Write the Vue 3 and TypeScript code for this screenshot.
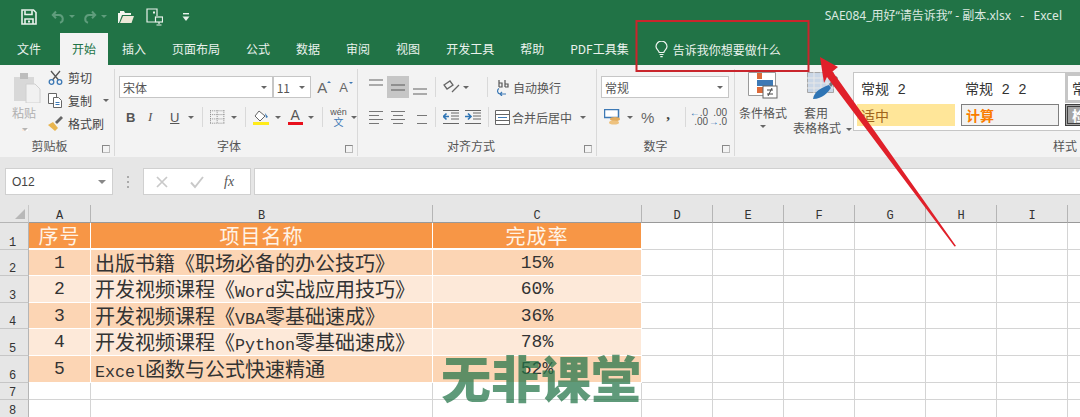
<template>
  <div class="excel">
    <header class="titlebar">
      <div class="qat">
        <svg class="qi save" width="16" height="16" viewBox="0 0 16 16" fill="none" stroke="#e9f2ec" stroke-width="1.6">
          <path d="M1 1h11.5L15 3.5V15H1z" />
          <path d="M4 1.5v4h7v-4M4 15v-5h8v5" />
          <rect x="7" y="11.5" width="2" height="2" fill="#e9f2ec" stroke="none" />
        </svg>
        <svg class="qi undo" width="14" height="14" viewBox="0 0 14 14" fill="none" stroke="#5f9d7c" stroke-width="2">
          <path d="M5 1.5 1.8 5 5 8.2M2 5h6a4 4 0 0 1 1 7.8" />
        </svg>
        <span class="qcaret dim"></span>
        <svg class="qi redo" width="14" height="14" viewBox="0 0 14 14" fill="none" stroke="#5f9d7c" stroke-width="2">
          <path d="M9 1.5 12.2 5 9 8.2M12 5H6a4 4 0 0 0-1 7.8" />
        </svg>
        <span class="qcaret dim"></span>
        <svg class="qi open" width="16" height="14" viewBox="0 0 16 14">
          <path d="M0 13V3h2V1h4l1 2h6v2H4L1 13z" fill="#f3f6ef" />
          <path d="M2 13 5 6h11l-2.5 7z" fill="#ece9d8" />
        </svg>
        <svg class="qi preview" width="17" height="18" viewBox="0 0 17 18" fill="none" stroke="#e9f2ec" stroke-width="1.2">
          <path d="M9 14H1V1h10v7" />
          <rect x="7" y="3.5" width="2" height="2" fill="#e9f2ec" stroke="none" />
          <rect x="9.5" y="9" width="7" height="5" />
          <path d="M13 14v2M10.5 17h5" />
        </svg>
        <svg class="qi more" width="8" height="10" viewBox="0 0 8 10">
          <rect x="1" y="1" width="6" height="1.4" fill="#e9f2ec" />
          <path d="M0.5 4.5h7L4 9z" fill="#e9f2ec" />
        </svg>
      </div>
      <div class="doc-title">SAE084_用好“请告诉我” - 副本.xlsx &nbsp;&nbsp;-&nbsp;&nbsp; Excel</div>
    </header>

    <nav class="tabs">
      <span v-for="t in tabs" :key="t" class="tab" :class="{ active: t === '开始' }">{{ t }}</span>
      <span class="tell">
        <svg width="13" height="17" viewBox="0 0 13 17" fill="none" stroke="#eef5f0" stroke-width="1.2">
          <path d="M4.2 11.5C4 9.5 1 8.5 1 5.6a5.5 5.5 0 0 1 11 0c0 2.9-3 3.9-3.2 5.900z" />
          <path d="M4.500 13.500h4M5.300 15.700h2.400" />
        </svg>
        告诉我你想要做什么
      </span>
    </nav>

    <section class="ribbon">
      <div class="group clip">
        <div class="body">
          <div class="paste">
            <svg width="29" height="31" viewBox="0 0 29 31">
              <path d="M2 5h20v24H2z" fill="#d8d8d8" />
              <path d="M8 1h8v6H8z" fill="#bdbdbd" />
              <path d="M14 12h9l5 5v14H14z" fill="#f1f1f1" stroke="#d0d0d0" />
            </svg>
            <span>粘贴</span>
            <i class="caret light"></i>
          </div>
          <div class="clip-list">
            <div class="clip-item">
              <svg width="15" height="15" viewBox="0 0 15 15" fill="none" stroke-width="1.300">
                <path d="M3 1l7.500 9M12 1 4.500 10" stroke="#555" />
                <circle cx="3.500" cy="12" r="2.300" stroke="#3d79b5" />
                <circle cx="11.500" cy="12" r="2.300" stroke="#3d79b5" />
              </svg>
              剪切
            </div>
            <div class="clip-item">
              <svg width="15" height="15" viewBox="0 0 15 15" fill="#fff" stroke="#666">
                <path d="M.5.5h8v10h-8z" />
                <path d="M5.500 4.500h5l3 3v7h-8z" />
                <path d="M7.500 9.500h4M7.500 11.500h4" stroke="#3d79b5" />
              </svg>
              复制 <i class="caret copy-caret"></i>
            </div>
            <div class="clip-item">
              <svg width="15" height="15" viewBox="0 0 15 15">
                <path d="M0 9l5-3 5 6-3 3z" fill="#e8b54f" />
                <path d="M7 6 13 0l2 2-6 6z" fill="#666" />
              </svg>
              格式刷
            </div>
          </div>
        </div>
        <div class="label">剪贴板<i class="launcher"></i></div>
      </div>

      <div class="group font">
        <div class="body stacked">
          <div class="row">
            <div class="select font-name">宋体<i class="caret"></i></div>
            <div class="select font-size">11<i class="caret"></i></div>
            <span class="grow-a">A<b class="up"></b></span>
            <span class="grow-a small">A<b class="down"></b></span>
          </div>
          <div class="row tools">
            <span class="fmt bold">B</span>
            <span class="fmt italic">I</span>
            <span class="fmt under">U</span>
            <i class="caret"></i>
            <span class="sep"></span>
            <svg width="15" height="14" viewBox="0 0 15 14" stroke="#8a8a8a" stroke-dasharray="1 1" fill="none">
              <path d="M0 .5h15M0 4.500h15M0 9h15M0 13.500h15M.5 0v14M7.500 0v14M14.500 0v14" />
            </svg>
            <i class="caret border-caret"></i>
            <span class="sep"></span>
            <span class="bucket">
              <svg width="16" height="12" viewBox="0 0 16 12">
                <path d="M6 1l6 5-5 5-5-5z" fill="#fff" stroke="#666" />
                <path d="M12 3l3 4-2 1z" fill="#3d79b5" />
              </svg>
              <b class="swatch yellow"></b>
            </span>
            <i class="caret"></i>
            <span class="color-a">A<b class="swatch red"></b></span>
            <i class="caret"></i>
            <span class="sep"></span>
            <span class="wen"><small>wén</small>文</span>
            <i class="caret"></i>
          </div>
        </div>
        <div class="label">字体<i class="launcher"></i></div>
      </div>

      <div class="group align">
        <div class="body stacked">
          <div class="row">
            <span class="lines top"><i></i><i></i></span>
            <span class="lines middle on"><i></i><i></i></span>
            <span class="lines bottom"><i></i><i></i></span>
            <span class="sep"></span>
            <svg class="orient" width="17" height="15" viewBox="0 0 17 15" fill="none" stroke="#666" stroke-width="1.300">
              <path d="M1 5l6-4 3 4-6 4zM9 12l7-7" />
            </svg>
            <i class="caret"></i>
            <span class="sep wide"></span>
            <svg width="16" height="17" viewBox="0 0 16 17" fill="none" stroke-width="1.200">
              <path d="M3 1v7M3 4h3v4H3M9 1v7M9 5h3v3H9" stroke="#555" />
              <path d="M10 15H4a3 3 0 0 1-1-5.500M6 13l-2 2 2 2" stroke="#3d79b5" />
            </svg>
            <span class="action wrap-text">自动换行</span>
          </div>
          <div class="row">
            <span class="para left"><i></i><i></i><i></i><i></i></span>
            <span class="para center"><i></i><i></i><i></i><i></i></span>
            <span class="para right"><i></i><i></i><i></i><i></i></span>
            <span class="sep"></span>
            <svg width="16" height="14" viewBox="0 0 16 14" fill="none">
              <path d="M8 3h8M8 6h8M8 9h8M0 13.500h16M0 .5h16" stroke="#666" />
              <path d="M6 6.500H1M3.500 3.500l-3 3 3 3" stroke="#2f75b5" stroke-width="1.600" />
            </svg>
            <svg class="indent-right" width="16" height="14" viewBox="0 0 16 14" fill="none">
              <path d="M8 3h8M8 6h8M8 9h8M0 13.500h16M0 .5h16" stroke="#666" />
              <path d="M0 6.500h5M3 3.500l3 3-3 3" stroke="#2f75b5" stroke-width="1.600" />
            </svg>
            <span class="sep second"></span>
            <svg width="15" height="15" viewBox="0 0 15 15" fill="#fff" stroke="#666">
              <path d="M.5.5h14v14H.5zM.5 4.500h14M.5 10.500h14" />
              <path d="M3 7.500h9" stroke="#3d79b5" />
            </svg>
            <span class="action">合并后居中</span>
            <i class="caret"></i>
          </div>
        </div>
        <div class="label">对齐方式<i class="launcher"></i></div>
      </div>

      <div class="group number">
        <div class="body stacked">
          <div class="row">
            <div class="select format">常规<i class="caret"></i></div>
          </div>
          <div class="row">
            <svg width="17" height="16" viewBox="0 0 17 16">
              <rect x=".5" y=".5" width="14" height="8" fill="#fff" stroke="#3d79b5" stroke-width="1.500" />
              <ellipse cx="11" cy="10" rx="5" ry="2" fill="#e3ac5e" />
              <ellipse cx="10" cy="13.500" rx="5" ry="2" fill="#eec27f" />
            </svg>
            <i class="caret"></i>
            <span class="percent">%</span>
            <span class="comma">,</span>
            <span class="sep"></span>
            <span class="decimal"><b><em>←</em>.0</b><b>.00</b></span>
            <span class="decimal"><b>.00</b><b><em>→</em>.0</b></span>
          </div>
        </div>
        <div class="label">数字<i class="launcher"></i></div>
      </div>

      <div class="group styles">
        <div class="body">
          <div class="big">
            <svg width="30" height="27" viewBox="0 0 30 27">
              <path d="M.5.5h27v23H.5z" fill="#fff" stroke="#9a9a9a" />
              <rect x="9" y="1" width="5" height="6" fill="#dd6b3a" />
              <rect x="9" y="8" width="16" height="6" fill="#3d79b5" />
              <rect x="9" y="15" width="8" height="6" fill="#dd6b3a" />
              <rect x="15" y="14" width="14" height="12" fill="#fff" stroke="#666" />
              <path d="M19 18h6M19 22h6M24 16l-4 8" stroke="#444" fill="none" />
            </svg>
            <span class="big-text">条件格式</span>
            <i class="caret"></i>
          </div>
          <div class="big table-fmt">
            <svg width="31" height="27" viewBox="0 0 31 27">
              <path d="M.5.5h26v20H.5z" fill="#c9d6e6" stroke="#a6a6a6" />
              <path d="M0 6h27M0 11h27M0 16h27M7 0v21M14 0v21M20 0v21" stroke="#e8e8e8" />
              <path d="M22 12 29 4l2 2-7 9z" fill="#777" />
              <path d="M6 27c1-8 10-12 16-14l2 3c-3 4-8 11-18 11z" fill="#2f75b5" />
            </svg>
            <span class="big-text apply">套用</span>
            <span class="big-text">表格格式<i class="caret"></i></span>
          </div>
          <div class="gallery">
            <span class="style-cell plain">常规 2</span>
            <span class="style-cell plain">常规 2 2</span>
            <span class="style-cell plain boxed">常规</span>
            <span class="style-cell medium">适中</span>
            <span class="style-cell calc">计算</span>
            <span class="style-cell check">检查</span>
          </div>
        </div>
        <div class="label styles-label">样式</div>
      </div>
    </section>

    <section class="formula">
      <div class="name-box">O12<i class="caret big-caret"></i></div>
      <div class="dots"><i></i><i></i><i></i></div>
      <div class="fx-box">
        <svg width="14" height="14" viewBox="0 0 14 14" stroke="#c9c9c9" stroke-width="1.700" fill="none">
          <path d="M2 2l10 10M12 2 2 12" />
        </svg>
        <svg width="14" height="14" viewBox="0 0 14 14" stroke="#c9c9c9" stroke-width="1.900" fill="none">
          <path d="M1 7.500 5 12l8-10" />
        </svg>
        <span class="fx">fx</span>
      </div>
      <div class="formula-input"></div>
    </section>

    <section class="sheet">
      <div class="corner"><i></i></div>
      <div v-for="c in columns" :key="c" class="col-head">{{ c }}</div>

      <template v-for="(n, r) in rowNumbers" :key="n">
        <div class="row-head">{{ n }}</div>
        <template v-if="r === 0">
          <div class="cell head center">序号</div>
          <div class="cell head center">项目名称</div>
          <div class="cell head center">完成率</div>
        </template>
        <template v-else-if="r <= items.length">
          <div class="cell center num" :class="shade(r)">{{ r }}</div>
          <div class="cell name" :class="shade(r)">
            <span v-for="(part, i) in splitName(items[r - 1].name)" :key="i" :class="{ latin: i % 2 === 1 }">{{ part }}</span>
          </div>
          <div class="cell center num" :class="shade(r)">{{ items[r - 1].rate }}</div>
        </template>
        <template v-else>
          <div class="cell"></div>
          <div class="cell"></div>
          <div class="cell"></div>
        </template>
        <div v-for="c in emptyCols" :key="c" class="cell"></div>
      </template>
    </section>

    <div class="watermark">无非课堂</div>

    <svg class="annotation" width="1080" height="417" viewBox="0 0 1080 417">
      <rect x="636.500" y="21" width="172" height="50" fill="none" stroke="#c9252c" stroke-width="2" />
      <polygon points="820,57 838,67 832.500,71.500 956,246 954.500,246.500 827,77 824,83" fill="#e0202a" />
    </svg>
  </div>
</template>

<script setup lang="ts">
const tabs = ['文件', '开始', '插入', '页面布局', '公式', '数据', '审阅', '视图', '开发工具', '帮助', 'PDF工具集']

const columns = ['A', 'B', 'C', 'D', 'E', 'F', 'G', 'H', 'I', 'J']
const emptyCols = columns.slice(3)
const rowNumbers = [1, 2, 3, 4, 5, 6, 7, 8]

const items = [
  { name: '出版书籍《职场必备的办公技巧》', rate: '15%' },
  { name: '开发视频课程《Word实战应用技巧》', rate: '60%' },
  { name: '开发视频课程《VBA零基础速成》', rate: '36%' },
  { name: '开发视频课程《Python零基础速成》', rate: '78%' },
  { name: 'Excel函数与公式快速精通', rate: '52%' }
]

const shade = (r: number) => (r % 2 === 1 ? 'dark' : 'light')
const splitName = (name: string) => name.split(/([A-Za-z]+)/)
</script>

<style>
html,
body {
  margin: 0;
  overflow: hidden;
  background: #fff;
}
</style>

<style scoped>
.excel {
  position: relative;
  width: 1080px;
  height: 417px;
  overflow: hidden;
  font-family: "Noto Sans CJK SC", "Noto Sans", sans-serif;
  font-size: 12px;
  color: #444;
  background: #e6e6e6;
}

i,
em {
  font-style: normal;
}

.titlebar {
  height: 33px;
  background: #217346;
  display: flex;
  align-items: center;
  justify-content: space-between;
  color: #dce9e1;
}

.qat {
  display: flex;
  align-items: center;
  padding-left: 21px;
}

.qi {
  flex: none;
}

.save {
  margin-right: 14px;
}

.qcaret {
  width: 0;
  height: 0;
  margin: 0 8px 0 4px;
  border: 3px solid transparent;
  border-top-color: #5f9d7c;
  border-bottom: 0;
}

.open {
  margin: 0 12px 0 3px;
}

.preview {
  margin-right: 19px;
}

.doc-title {
  padding: 0 18px 3px 0;
  white-space: nowrap;
  font-family: "Noto Sans", "Noto Sans CJK SC", sans-serif;
}

.tabs {
  height: 32px;
  background: #217346;
  display: flex;
  align-items: stretch;
  gap: 26px;
  padding-left: 17px;
  color: #eaf2ed;
}

.tab {
  display: flex;
  align-items: center;
  line-height: 1;
  white-space: nowrap;
}

.tab.active {
  background: #f3f3f3;
  color: #217346;
  padding: 0 12px;
  margin: 0 -12px 0 -7px;
}

.tell {
  display: flex;
  align-items: center;
  gap: 5px;
}

.ribbon {
  height: 92px;
  background: #f3f3f3;
  display: flex;
}

.group {
  flex: none;
  display: flex;
  flex-direction: column;
  border-right: 1px solid #d9d9d9;
  margin: 4px 0 1px;
}

.body {
  flex: 1;
  display: flex;
  min-height: 0;
}

.stacked {
  flex-direction: column;
  gap: 8px;
  padding-top: 7px;
}

.row {
  height: 22px;
  display: flex;
  align-items: center;
}

.label {
  position: relative;
  height: 21px;
  line-height: 21px;
  text-align: center;
  color: #555;
}

.launcher {
  position: absolute;
  right: 4px;
  bottom: 3px;
  width: 6px;
  height: 6px;
  border-left: 1px solid #888;
  border-top: 1px solid #888;
  border-right: 1px solid #bbb;
  border-bottom: 1px solid #bbb;
}

.caret {
  display: inline-block;
  width: 0;
  height: 0;
  flex: none;
  border: 3px solid transparent;
  border-top: 3px solid #666;
  border-bottom: 0;
}

.caret.light {
  border-top-color: #b5b5b5;
}

.sep {
  width: 1px;
  height: 20px;
  background: #d9d9d9;
  flex: none;
}

/* clipboard */
.clip {
  width: 114px;
}

.clip .label {
  padding-right: 15px;
}

.paste {
  width: 48px;
  padding-left: 12px;
  padding-top: 3px;
  display: flex;
  flex-direction: column;
  align-items: flex-start;
  color: #b0b0b0;
  box-sizing: border-box;
  line-height: 15px;
}

.paste span {
  margin-top: 2px;
}

.paste .caret {
  margin: 8px 0 0 10px;
}

.clip-list {
  display: flex;
  flex-direction: column;
  gap: 7px;
}

.clip-item {
  display: flex;
  align-items: center;
  gap: 5px;
  height: 16px;
  white-space: nowrap;
}

.copy-caret {
  margin-left: 6px;
}

/* font */
.font {
  width: 242px;
}

.font .label {
  padding-right: 14px;
}

.font .row {
  padding-left: 4px;
}

.select {
  height: 22px;
  box-sizing: border-box;
  background: #fff;
  border: 1px solid #c6c6c6;
  display: flex;
  align-items: center;
  justify-content: space-between;
  padding: 0 5px 0 3px;
  color: #555;
}

.font-name {
  width: 155px;
}

.font-size {
  width: 39px;
}

.grow-a {
  position: relative;
  font-size: 15px;
  color: #666;
  margin-left: 6px;
  width: 18px;
  font-family: "Liberation Sans", sans-serif;
}

.grow-a.small {
  font-size: 13px;
  margin-left: 4px;
}

.grow-a b {
  position: absolute;
  top: 2px;
  left: 10px;
  width: 0;
  height: 0;
  border: 2.500px solid transparent;
}

.grow-a .up {
  border-bottom-color: #3d79b5;
  border-top: 0;
}

.grow-a .down {
  border-top-color: #3d79b5;
  border-bottom: 0;
}

.tools {
  padding-left: 10px !important;
}

.fmt {
  font-family: "Liberation Sans", sans-serif;
  font-size: 13px;
  width: 22px;
  text-align: left;
  padding-left: 1px;
  color: #555;
}

.bold {
  font-weight: 700;
}

.italic {
  font-style: italic;
  font-family: "Liberation Serif", serif;
}

.under {
  width: 18px;
  text-decoration: underline;
}

.under + .caret {
  margin-left: 1px;
}

.tools .sep {
  margin: 0 7px 0 8px;
}

.border-caret {
  margin-left: 6px;
}

.bucket {
  display: flex;
  flex-direction: column;
  width: 16px;
  margin: 0 6px 0 0;
}

.swatch {
  display: block;
  height: 3px;
}

.yellow {
  background: #ffeb1a;
}

.red {
  background: #e8101c;
}

.color-a {
  display: flex;
  flex-direction: column;
  width: 16px;
  margin: 0 5px 0 7px;
  text-align: center;
  line-height: 13px;
  font-size: 14px;
  color: #555;
  font-family: "Liberation Sans", sans-serif;
}

.wen {
  display: flex;
  flex-direction: column;
  align-items: center;
  color: #3d79b5;
  font-size: 10px;
  line-height: 9px;
  width: 18px;
  margin-right: 4px;
}

.wen small {
  color: #555;
  font-size: 9px;
  font-family: "Liberation Sans", sans-serif;
}

/* alignment */
.align {
  width: 238px;
}

.align .label {
  padding-right: 12px;
}

.align .row {
  padding-left: 7px;
  gap: 0;
}

.lines,
.para {
  display: flex;
  flex-direction: column;
  width: 22px;
  height: 22px;
  flex: none;
  box-sizing: border-box;
  padding: 0 4px;
}

.lines i,
.para i {
  display: block;
  height: 1px;
  background: #777;
}

.lines {
  gap: 3px;
}

.lines i {
  height: 2px;
  background: #aaa;
}

.lines.top {
  justify-content: flex-start;
  padding-top: 3px;
}

.lines.middle {
  justify-content: center;
}

.lines.middle.on {
  background: #c6c6c6;
}

.lines.middle.on i {
  background: #8f8f8f;
}

.lines.bottom {
  justify-content: flex-end;
  padding-bottom: 3px;
}

.para {
  justify-content: center;
  gap: 3px;
}

.para i:nth-child(even) {
  width: 10px;
}

.para.center {
  align-items: center;
}

.para.center i {
  width: 14px;
}

.para.center i:nth-child(even) {
  width: 10px;
}

.para.right {
  align-items: flex-end;
}

.align .sep {
  margin: 0 7px 0 4px;
}

.align .sep.wide {
  margin: 0 8px 0 18px;
}

.align .sep.second {
  margin: 0 6px 0 7px;
}

.orient {
  flex: none;
  margin-right: 3px;
}

.indent-right {
  margin-left: 6px;
}

.action {
  margin-left: 2px;
  white-space: nowrap;
  color: #555;
}

.wrap-text {
  margin-left: 1px;
}

.action + .caret {
  margin-left: 8px;
}

/* number */
.number {
  width: 137px;
}

.number .label {
  padding-right: 20px;
}

.number .row {
  padding-left: 4px;
}

.format {
  width: 128px;
}

.number .row + .row {
  padding-left: 7px;
}

.number .caret {
  margin: 0 8px 0 6px;
}

.format .caret {
  margin: 0;
}

.percent {
  font-size: 15px;
  margin-right: 12px;
  font-family: "Liberation Sans", sans-serif;
  color: #666;
}

.comma {
  font-size: 15px;
  font-weight: 700;
  font-family: "Liberation Serif", serif;
  margin-right: 15px;
  padding-bottom: 6px;
}

.number .sep {
  margin-right: 3px;
}

.decimal {
  display: flex;
  flex-direction: column;
  width: 19px;
  font-size: 10px;
  line-height: 9px;
  font-family: "Liberation Sans", sans-serif;
}

.decimal b {
  font-weight: 400;
  text-align: right;
  color: #555;
}

.decimal em {
  color: #2f75b5;
}

/* styles */
.styles {
  flex: 1;
  border-right: 0;
}

.big {
  flex: none;
  width: 56px;
  display: flex;
  flex-direction: column;
  align-items: center;
  padding-top: 3px;
}

.big svg {
  margin-bottom: 6px;
}

.big-text {
  line-height: 15px;
  white-space: nowrap;
  color: #555;
}

.big .caret {
  margin-top: 5px;
}

.big-text .caret {
  margin: 0 0 2px 5px;
}

.table-fmt {
  width: 57px;
  margin-left: 2px;
  align-items: flex-start;
}

.table-fmt svg {
  margin-left: 14px;
}

.apply {
  margin-left: 11px;
}

.gallery {
  flex: none;
  width: 228px;
  height: 59px;
  box-sizing: border-box;
  margin: 3px 0 0 3px;
  background: #fff;
  border: 1px solid #c6c6c6;
  display: grid;
  grid-template-columns: 104px 104px 104px;
  grid-template-rows: 30px 22px;
  row-gap: 1px;
  padding-left: 3px;
  font-family: "Liberation Mono", "Noto Sans CJK SC", monospace;
  font-size: 14px;
  overflow: hidden;
}

.style-cell {
  display: flex;
  align-items: center;
  padding-left: 4px;
  width: 98px;
  box-sizing: border-box;
  white-space: pre;
  color: #333;
}

.medium {
  background: #ffe699;
  color: #a0641c;
}

.calc {
  background: #f2f2f2;
  border: 1px solid #7f7f7f;
  color: #fa7d00;
  font-weight: 700;
}

.check {
  background: #a5a5a5;
  border: 3px double #3f3f3f;
  color: #fff;
  font-weight: 700;
}

.boxed {
  border: 3px solid #c6c6c6;
  border-right: 0;
}

.styles-label {
  text-align: right;
  padding-right: 4px;
}

/* formula bar */
.formula {
  height: 48px;
  box-sizing: border-box;
  padding-top: 11px;
  display: flex;
  align-items: flex-start;
  padding-left: 5px;
  background: #e6e6e6;
}

.name-box {
  width: 108px;
  height: 27px;
  box-sizing: border-box;
  background: #fff;
  border: 1px solid #d0d0d0;
  display: flex;
  align-items: center;
  justify-content: space-between;
  padding: 0 6px;
  font-family: "Liberation Sans", sans-serif;
  font-size: 12px;
}

.big-caret {
  border-width: 4px;
  border-bottom: 0;
  border-top-color: #888;
}

.dots {
  width: 30px;
  height: 27px;
  display: flex;
  flex-direction: column;
  align-items: center;
  justify-content: center;
  gap: 3px;
}

.dots i {
  width: 2px;
  height: 2px;
  background: #aaa;
}

.fx-box {
  width: 108px;
  height: 27px;
  box-sizing: border-box;
  background: #fff;
  border: 1px solid #d0d0d0;
  display: flex;
  align-items: center;
  gap: 21px;
  padding-left: 11px;
}

.fx {
  font-family: "Liberation Serif", serif;
  font-style: italic;
  font-size: 14px;
  color: #555;
  margin-left: -1px;
}

.formula-input {
  flex: 1;
  height: 27px;
  margin-left: 3px;
  box-sizing: border-box;
  background: #fff;
  border: 1px solid #d0d0d0;
  border-right: 0;
}

/* sheet */
.sheet {
  display: grid;
  grid-template-columns: 29px 62px 342px 209px 71px 71px 71px 71px 71px 71px 71px;
  grid-template-rows: 18px 27px 26px 27px 26px 27px 27px 17px 18px;
  background: #fff;
  font-family: "Liberation Mono", monospace;
  overflow: hidden;
}

.corner {
  position: relative;
  background: #e6e6e6;
  border-right: 1px solid #c8c8c8;
  border-bottom: 1px solid #b5b5b5;
  box-sizing: border-box;
}

.corner i {
  position: absolute;
  right: 3px;
  bottom: 3px;
  width: 0;
  height: 0;
  border-left: 10px solid transparent;
  border-bottom: 10px solid #b8b8b8;
}

.col-head {
  background: #e6e6e6;
  border-right: 1px solid #b5b5b5;
  border-bottom: 1px solid #999;
  box-sizing: border-box;
  text-align: center;
  font-size: 12px;
  line-height: 23px;
  height: 18px;
  overflow: hidden;
  color: #333;
}

.row-head {
  background: #e6e6e6;
  border-right: 1px solid #b5b5b5;
  border-bottom: 1px solid #c6c6c6;
  box-sizing: border-box;
  display: flex;
  align-items: flex-end;
  justify-content: center;
  padding-right: 3px;
  font-size: 12px;
  line-height: 12px;
  color: #333;
}

.cell {
  box-sizing: border-box;
  border-right: 1px solid #d4d4d4;
  border-bottom: 1px solid #d4d4d4;
  display: flex;
  align-items: center;
  white-space: nowrap;
  font-family: "Liberation Mono", "Noto Sans CJK SC", monospace;
  font-size: 20px;
  color: #333;
}

.center {
  justify-content: center;
}

.head {
  background: #f79646;
  color: #fff3e6;
  border-right-color: #fff;
  border-bottom: 2px solid #fff;
  font-family: "Noto Sans CJK SC", sans-serif;
  letter-spacing: 1px;
}

.dark {
  background: #fcd5b4;
  border-right-color: #fff;
  border-bottom-color: #fff;
}

.light {
  background: #fde9d9;
  border-right-color: #fff;
  border-bottom-color: #fff;
}

.num {
  font-size: 18px;
}

.name {
  display: block;
  line-height: 26px;
  padding-left: 4px;
  font-family: "Noto Sans CJK SC", sans-serif;
  text-spacing-trim: space-all;
}

.latin {
  font-family: "Liberation Mono", monospace;
  font-size: 16.67px;
}

/* overlays */
.watermark {
  position: absolute;
  left: 441px;
  top: 348px;
  width: 200px;
  height: 56px;
  font-family: "Noto Sans CJK SC", sans-serif;
  font-size: 50px;
  line-height: 56px;
  font-weight: 900;
  white-space: nowrap;
  color: rgba(33, 115, 70, 0.72);
  overflow: hidden;
}

.annotation {
  position: absolute;
  left: 0;
  top: 0;
  pointer-events: none;
}
</style>
